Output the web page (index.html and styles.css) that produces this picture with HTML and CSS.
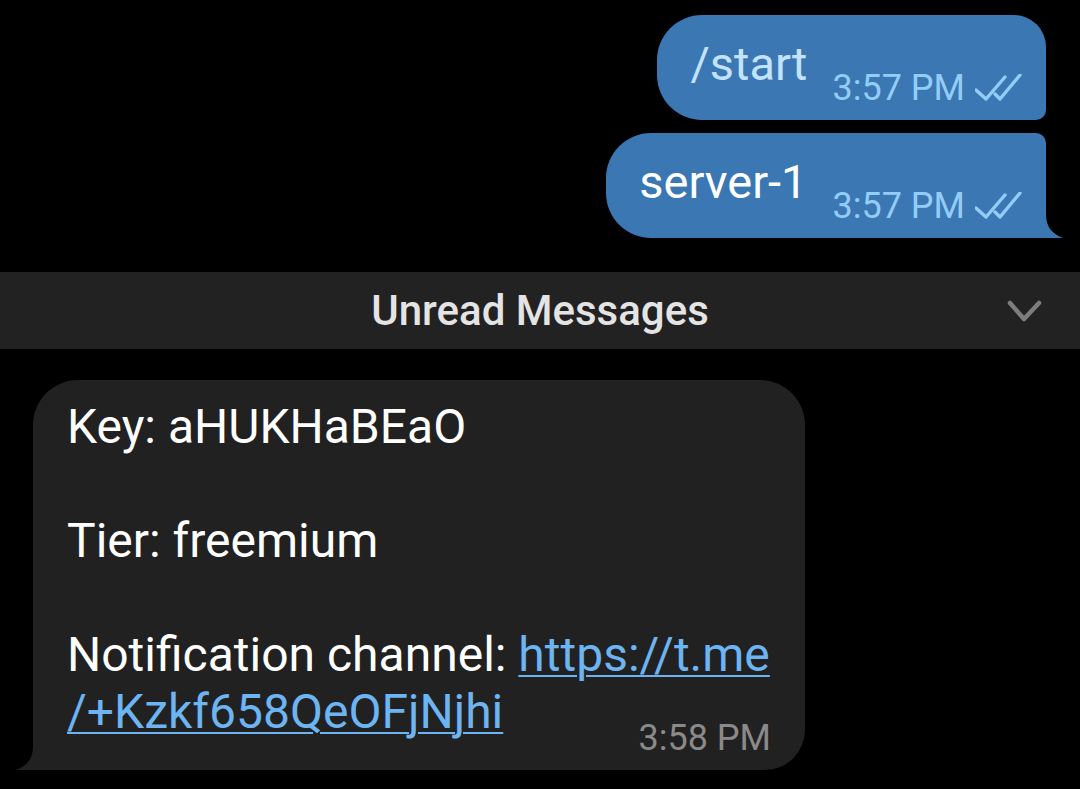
FILE: index.html
```html
<!DOCTYPE html>
<html>
<head>
<meta charset="utf-8">
<link rel="stylesheet" href="styles.css">
</head>
<body>
<div class="chat">
  <div class="out-group">
    <div class="bubble-out first">
      <span class="msg-text cmd">/start</span>
      <span class="meta">3:57 PM
        <svg class="checks" width="48" height="28" viewBox="0 0 48 28"><path d="M1 16 L11 25 L30 3 M20 20 L25 25 L45 1" fill="none" stroke="#93cdf7" stroke-width="3.4" stroke-linecap="round" stroke-linejoin="round"/></svg>
      </span>
    </div>
    <div class="bubble-out last">
      <span class="msg-text">server-1</span>
      <span class="meta">3:57 PM
        <svg class="checks" width="48" height="28" viewBox="0 0 48 28"><path d="M1 16 L11 25 L30 3 M20 20 L25 25 L45 1" fill="none" stroke="#93cdf7" stroke-width="3.4" stroke-linecap="round" stroke-linejoin="round"/></svg>
      </span>
      <svg class="tail-out" width="17" height="34" viewBox="0 0 17 34"><path d="M0 0 L0 10 C0 24 7 30 17 34 L0 34 Z" fill="#3a77b3"/></svg>
    </div>
  </div>

  <div class="unread">
    <span class="unread-label">Unread Messages</span>
    <svg class="chevron" width="36" height="24" viewBox="0 0 36 24"><path d="M3 4 L17 20 L32 4" fill="none" stroke="#7d7d7d" stroke-width="4.5" stroke-linecap="round" stroke-linejoin="round"/></svg>
  </div>

  <div class="bubble-in">
    <div class="in-text">
      <div class="line">Key: aHUKHaBEaO</div>
      <div class="line">&nbsp;</div>
      <div class="line">Tier: freemium</div>
      <div class="line">&nbsp;</div>
      <div class="line">Notification channel: <a class="link" href="#">https://t.me</a></div>
      <div class="line"><a class="link" href="#">/+Kzkf658QeOFjNjhi</a></div>
    </div>
    <div class="in-time">3:58 PM</div>
    <svg class="tail-in" width="17" height="34" viewBox="0 0 17 34"><path d="M17 0 L17 10 C17 24 10 30 0 34 L17 34 Z" fill="#212121"/></svg>
  </div>
</div>
</body>
</html>
```

FILE: styles.css
```css
html, body {
  margin: 0;
  padding: 0;
  background: #000;
}
body {
  width: 1080px;
  height: 789px;
  overflow: hidden;
  font-family: Roboto, "Noto Sans", sans-serif;
}
.chat {
  display: flex;
  flex-direction: column;
  padding-top: 15px;
}
.out-group {
  display: flex;
  flex-direction: column;
  align-items: flex-end;
  gap: 13px;
  padding-right: 34px;
}
.bubble-out {
  position: relative;
  box-sizing: border-box;
  height: 105px;
  display: flex;
  align-items: flex-start;
  padding: 20px 23px 0 33px;
  background: #3a77b3;
}
.bubble-out.first {
  border-radius: 45px 32px 10px 45px;
}
.bubble-out.last {
  border-radius: 45px 10px 0 45px;
}
.msg-text {
  font-size: 47px;
  line-height: 57px;
  color: #ffffff;
}
.msg-text.cmd {
  color: #c3e2fb;
}
.meta {
  display: flex;
  align-items: center;
  gap: 10px;
  margin-top: 33px;
  margin-left: 25px;
  font-size: 36px;
  line-height: 40px;
  color: #93cdf7;
  white-space: nowrap;
}
.checks {
  display: block;
}
.tail-out {
  position: absolute;
  right: -17px;
  bottom: 0;
}
.unread {
  margin-top: 34px;
  height: 77px;
  background: #222222;
  display: grid;
  grid-template-columns: 1fr auto 1fr;
  align-items: center;
}
.unread-label {
  grid-column: 2;
  font-size: 42px;
  font-weight: 500;
  color: #e4e4e4;
}
.chevron {
  grid-column: 3;
  justify-self: end;
  margin-right: 37px;
  display: block;
}
.bubble-in {
  position: relative;
  align-self: flex-start;
  margin-top: 31px;
  margin-left: 33px;
  width: 772px;
  box-sizing: border-box;
  padding: 18px 34px 12px 34px;
  background: #212121;
  border-radius: 45px 45px 40px 0;
}
.in-text {
  font-size: 48px;
  line-height: 57px;
  color: #ffffff;
  white-space: nowrap;
}
.link {
  color: #6cb4f2;
  text-decoration: underline;
  text-decoration-thickness: 2px;
  text-underline-offset: 4px;
}
.in-time {
  margin-top: -22px;
  text-align: right;
  font-size: 36px;
  line-height: 40px;
  color: #8a8a8a;
}
.tail-in {
  position: absolute;
  left: -17px;
  bottom: 0;
}
```
